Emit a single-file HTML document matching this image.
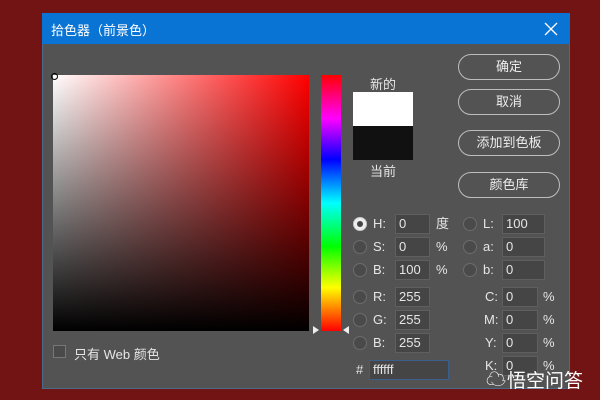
<!DOCTYPE html><html><head><style>
body{margin:0;width:600px;height:400px;background:#721414;position:relative;overflow:hidden;font-family:"Liberation Sans","Noto Sans CJK SC",sans-serif;color:#e6e6e6;font-size:13px}
.a{position:absolute}
.dlg{left:42px;top:13px;width:528px;height:376px;background:#535353;border:1px solid #4a6a8a;box-sizing:border-box}
.tb{left:42px;top:13px;width:528px;height:31px;background:#0a74d4;color:#fff}
.btn{position:absolute;left:458px;width:100px;height:24px;border:1px solid #bdbdbd;border-radius:13px;text-align:center;line-height:24px;font-size:13px;color:#eee}
.in{position:absolute;background:#454545;border:1px solid #5f5f5f;line-height:18px;padding-left:3px;box-sizing:border-box;font-size:13px;color:#e6e6e6;height:20px}
.rd{position:absolute;width:12px;height:12px;border-radius:50%;background:#4a4a4a;border:1px solid #6c6c6c}
.lb{position:absolute;font-size:13px}
</style></head><body>
<div class="a dlg"></div>
<div class="a tb"><span class="a" style="left:9px;top:7px;font-size:13px">拾色器（前景色）</span><svg class="a" style="left:502px;top:9px" width="14" height="14"><path d="M1 1L13 13M13 1L1 13" stroke="#fff" stroke-width="1.3"/></svg></div>
<div class="a" style="left:53px;top:75px;width:256px;height:256px;background:linear-gradient(to bottom,rgba(0,0,0,0),#000),linear-gradient(to right,#fff,#f00)"></div>
<div class="a" style="left:51px;top:73px;width:5px;height:5px;border:1px solid #000;border-radius:50%"></div>
<div class="a" style="left:321px;top:75px;width:20px;height:256px;background:linear-gradient(to bottom,#f00,#f0f 17%,#00f 33%,#0ff 50%,#0f0 67%,#ff0 83%,#f00)"></div>
<div class="a" style="left:313px;top:326px;width:0;height:0;border-left:6px solid #eee;border-top:4px solid transparent;border-bottom:4px solid transparent"></div>
<div class="a" style="left:343px;top:326px;width:0;height:0;border-right:6px solid #eee;border-top:4px solid transparent;border-bottom:4px solid transparent"></div>
<span class="lb" style="left:370px;top:74px">新的</span>
<div class="a" style="left:353px;top:92px;width:60px;height:34px;background:#fff"></div>
<div class="a" style="left:353px;top:126px;width:60px;height:34px;background:#111"></div>
<span class="lb" style="left:370px;top:161px">当前</span>
<div class="btn" style="top:54px">确定</div>
<div class="btn" style="top:89px">取消</div>
<div class="btn" style="top:130px">添加到色板</div>
<div class="btn" style="top:172px">颜色库</div>
<div class="rd" style="left:353px;top:217px;background:#eee;border-color:#ccc"><div class="a" style="left:3px;top:3px;width:6px;height:6px;border-radius:50%;background:#444"></div></div>
<div class="rd" style="left:353px;top:240px"></div><div class="rd" style="left:353px;top:263px"></div>
<div class="rd" style="left:353px;top:290px"></div><div class="rd" style="left:353px;top:313px"></div><div class="rd" style="left:353px;top:336px"></div>
<div class="rd" style="left:463px;top:217px"></div><div class="rd" style="left:463px;top:240px"></div><div class="rd" style="left:463px;top:263px"></div>
<span class="lb" style="left:373px;top:216px">H:</span><span class="lb" style="left:373px;top:239px">S:</span><span class="lb" style="left:373px;top:262px">B:</span>
<span class="lb" style="left:373px;top:289px">R:</span><span class="lb" style="left:373px;top:312px">G:</span><span class="lb" style="left:373px;top:335px">B:</span>
<div class="in" style="left:395px;top:214px;width:35px">0</div><div class="in" style="left:395px;top:237px;width:35px">0</div><div class="in" style="left:395px;top:260px;width:35px">100</div>
<div class="in" style="left:395px;top:287px;width:35px">255</div><div class="in" style="left:395px;top:310px;width:35px">255</div><div class="in" style="left:395px;top:333px;width:35px">255</div>
<span class="lb" style="left:436px;top:213px">度</span><span class="lb" style="left:436px;top:239px">%</span><span class="lb" style="left:436px;top:262px">%</span>
<span class="lb" style="left:483px;top:216px">L:</span><span class="lb" style="left:483px;top:239px">a:</span><span class="lb" style="left:483px;top:262px">b:</span>
<div class="in" style="left:502px;top:214px;width:43px">100</div><div class="in" style="left:502px;top:237px;width:43px">0</div><div class="in" style="left:502px;top:260px;width:43px">0</div>
<span class="lb" style="left:485px;top:289px">C:</span><span class="lb" style="left:484px;top:312px">M:</span><span class="lb" style="left:485px;top:335px">Y:</span><span class="lb" style="left:485px;top:358px">K:</span>
<div class="in" style="left:502px;top:287px;width:36px">0</div><div class="in" style="left:502px;top:310px;width:36px">0</div><div class="in" style="left:502px;top:333px;width:36px">0</div><div class="in" style="left:502px;top:356px;width:36px">0</div>
<span class="lb" style="left:543px;top:289px">%</span><span class="lb" style="left:543px;top:312px">%</span><span class="lb" style="left:543px;top:335px">%</span><span class="lb" style="left:543px;top:358px">%</span>
<span class="lb" style="left:356px;top:362px">#</span>
<div class="in" style="left:369px;top:360px;width:80px;border-color:#3a5f8a">ffffff</div>
<div class="a" style="left:53px;top:345px;width:11px;height:11px;border:1px solid #777;background:#4a4a4a"></div>
<span class="lb" style="left:74px;top:344px">只有 Web 颜色</span>
<div class="a" style="left:0;top:389px;width:600px;height:11px;background:#721414"></div>
<span class="a" style="left:486px;top:363px;color:#fff;font-size:20px">☁</span>
<span class="a" style="left:507px;top:366px;color:#fff;font-size:19px">悟空问答</span>
</body></html>
